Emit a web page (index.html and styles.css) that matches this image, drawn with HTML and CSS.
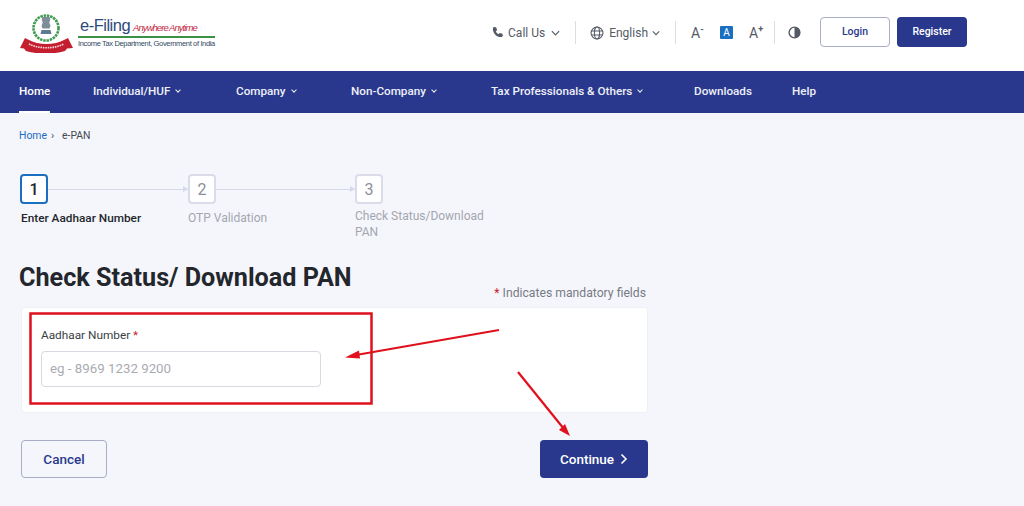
FILE: index.html
```html
<!DOCTYPE html>
<html lang="en">
<head>
    <meta charset="UTF-8">
    <meta name="viewport" content="width=device-width, initial-scale=1.0">
    <title>e-PAN - e-Filing</title>
    <link rel="stylesheet" href="styles.css">
</head>
<body>
    <header class="top-bar">
        <a class="logo" href="#">
            <svg class="logo-emblem" viewBox="0 0 54 40" width="54" height="40">
                <circle cx="26" cy="15" r="12.500" fill="none" stroke="#3f9a52" stroke-width="2.600" stroke-dasharray="2.500 .8"/>
                <path d="M22.500 4h7l.8 2.500-1 3 1.200 3.500-1 2.500h-7l-1-2.500 1.200-3.500-1-3z" fill="#7f8c99"/>
                <path d="M21.500 17h9l1 4h-11z" fill="#5d7a91"/>
                <path d="M0 35l3-6 2-4 3 1.500c11 6 26 6 37 0l3-1.500 2 4 3 6-6 .5-2 2.500c-12 3.500-27 3.500-39 0l-2-2.500z" fill="#c41f30"/>
                <path d="M9 31c10 5 25 5 35 0" fill="none" stroke="#f6d5d5" stroke-width="1.600" stroke-dasharray="1.600 .8"/>
            </svg>
            <div class="logo-text">
                <div class="logo-title">
                    <span class="logo-name">e-Filing</span>
                    <span class="logo-tag">Anywhere Anytime</span>
                </div>
                <div class="logo-dept">Income Tax Department, Government of India</div>
            </div>
        </a>
        <div class="top-tools">
            <div class="tool tool-call">
                <svg width="13" height="13" viewBox="0 0 24 24"><path fill="#555b66" d="M6.600 2l3.200.7 1.400 5.300-2.400 2.200c1 2.200 2.700 3.900 4.900 4.900l2.200-2.400 5.300 1.400.7 3.200c.2 1.500-.9 3-2.500 3.100C10.500 21 3 13.500 3.500 4.500c.1-1.600 1.600-2.700 3.100-2.500z"/></svg>
                <span>Call Us</span>
                <svg class="chev" width="9" height="6" viewBox="0 0 10 6"><path d="M1 1l4 4 4-4" fill="none" stroke="#555b66" stroke-width="1.300"/></svg>
            </div>
            <div class="tool tool-lang">
                <svg width="14" height="14" viewBox="0 0 16 16" fill="none" stroke="#555b66" stroke-width="1.200"><circle cx="8" cy="8" r="6.800"/><ellipse cx="8" cy="8" rx="3" ry="6.800"/><path d="M1.500 5.700h13M1.500 10.300h13"/></svg>
                <span>English</span>
                <svg class="chev" width="8" height="6" viewBox="0 0 10 6"><path d="M1 1l4 4 4-4" fill="none" stroke="#555b66" stroke-width="1.400"/></svg>
            </div>
            <div class="tool tool-font">
                <span class="font-size">A<sup>-</sup></span>
                <span class="font-current">A</span>
                <span class="font-size">A<sup>+</sup></span>
            </div>
            <div class="tool tool-contrast">
                <svg width="13" height="13" viewBox="0 0 14 14"><circle cx="7" cy="7" r="5.800" fill="none" stroke="#555b66" stroke-width="1.500"/><path d="M7 1a6 6 0 0 1 0 12z" fill="#555b66"/></svg>
            </div>
            <a class="btn btn-login" href="#">Login</a>
            <a class="btn btn-register" href="#">Register</a>
        </div>
    </header>

    <nav class="main-nav">
        <a class="nav-item nav-home active" href="#">Home</a>
        <a class="nav-item nav-individual" href="#">Individual/HUF<i class="nav-chev"></i></a>
        <a class="nav-item nav-company" href="#">Company<i class="nav-chev"></i></a>
        <a class="nav-item nav-noncompany" href="#">Non-Company<i class="nav-chev"></i></a>
        <a class="nav-item nav-tax" href="#">Tax Professionals &amp; Others<i class="nav-chev"></i></a>
        <a class="nav-item nav-downloads" href="#">Downloads</a>
        <a class="nav-item" href="#">Help</a>
    </nav>

    <main class="content">
        <div class="breadcrumb"><a href="#">Home</a><span class="crumb-sep">&rsaquo;</span><span>e-PAN</span></div>

        <ol class="stepper">
            <li class="step step-one active">
                <div class="step-head"><span class="step-num">1</span><span class="step-line"></span></div>
                <div class="step-label">Enter Aadhaar Number</div>
            </li>
            <li class="step step-two">
                <div class="step-head"><span class="step-num">2</span><span class="step-line"></span></div>
                <div class="step-label">OTP Validation</div>
            </li>
            <li class="step step-three">
                <div class="step-head"><span class="step-num">3</span></div>
                <div class="step-label">Check Status/Download PAN</div>
            </li>
        </ol>

        <section class="form-area">
            <h1 class="page-title">Check Status/ Download PAN</h1>
            <p class="mandatory"><b>*</b> Indicates mandatory fields</p>
            <div class="form-card">
                <label class="field-label" for="aadhaar">Aadhaar Number <b>*</b></label>
                <input class="field-input" id="aadhaar" type="text" placeholder="eg - 8969 1232 9200">
            </div>
            <div class="form-actions">
                <a class="btn-large btn-cancel" href="#">Cancel</a>
                <a class="btn-large btn-continue" href="#">Continue
                    <svg width="8" height="12" viewBox="0 0 8 12"><path d="M1.500 1.500L6 6l-4.500 4.500" fill="none" stroke="#fff" stroke-width="1.600"/></svg>
                </a>
            </div>
        </section>
    </main>

    <!-- red annotations drawn on top of the screenshot -->
    <svg class="annotations" width="1024" height="506" viewBox="0 0 1024 506">
        <rect x="30.500" y="313.500" width="341" height="90" fill="none" stroke="#e0101c" stroke-width="2.500"/>
        <path d="M499 330L356 355" stroke="#e0101c" stroke-width="2.200" fill="none"/>
        <path d="M345 357.500l14-7 1 8z" fill="#e0101c"/>
        <path d="M518 372L564 429" stroke="#e0101c" stroke-width="2.200" fill="none"/>
        <path d="M570 436l-11-6 6-6z" fill="#e0101c"/>
    </svg>
</body>
</html>
```

FILE: styles.css
```css
* {
    box-sizing: border-box;
}

body {
    font-family: Roboto, "Liberation Sans", sans-serif;
    margin: 0;
    background-color: #f5f6fb;
    color: #23262c;
    height: 506px;
    overflow: hidden;
}

a {
    text-decoration: none;
    color: inherit;
}

.top-bar {
    height: 71px;
    background: #fff;
    display: flex;
    align-items: center;
    justify-content: space-between;
    padding: 0 57px 8px 20px;
}

.logo {
    display: flex;
    align-items: flex-end;
    gap: 4px;
    margin-top: 2px;
}

.logo-emblem {
    display: block;
}

.logo-text {
    font-family: "Liberation Sans", Arial, sans-serif;
    padding-bottom: 4px;
}

.logo-title {
    display: flex;
    align-items: baseline;
    gap: 3px;
    border-bottom: 2px solid #3c9147;
    line-height: 16px;
    width: 137px;
    padding-left: 2px;
}

.logo-name {
    font-size: 16.500px;
    letter-spacing: -0.500px;
    color: #2c4a7c;
}

.logo-tag {
    font-size: 9.500px;
    font-style: italic;
    color: #c42a45;
    white-space: nowrap;
    letter-spacing: -0.950px;
}

.logo-dept {
    font-size: 7.500px;
    letter-spacing: -0.350px;
    color: #2f4a63;
    line-height: 11px;
    white-space: nowrap;
}

.top-tools {
    display: flex;
    align-items: center;
    color: #555b66;
    font-size: 12px;
}

.tool {
    display: flex;
    align-items: center;
    height: 23px;
    margin-top: 2px;
}

.tool-call {
    gap: 4px;
    padding-right: 15px;
    border-right: 1px solid #dcdde3;
}

.tool-call .chev {
    margin-left: 2px;
}

.tool-lang {
    gap: 5px;
    padding: 0 15px 0 14px;
    border-right: 1px solid #dcdde3;
}

.tool-lang .chev {
    margin-left: -1px;
}

.tool-font {
    gap: 16px;
    padding: 0 12px 0 15px;
    border-right: 1px solid #dcdde3;
}

.font-size {
    font-size: 14px;
    width: 13px;
    white-space: nowrap;
}

.font-size sup {
    font-size: 9px;
    line-height: 0;
    font-weight: 700;
}

.font-current {
    width: 13px;
    height: 13px;
    background: #1a6fc0;
    color: #fff;
    font-size: 10px;
    border-radius: 1px;
    display: flex;
    align-items: center;
    justify-content: center;
}

.tool-contrast {
    padding-left: 13px;
    margin-right: 19px;
}

.btn {
    width: 70px;
    height: 30px;
    display: flex;
    align-items: center;
    justify-content: center;
    border-radius: 4px;
    font-size: 10.500px;
    font-weight: 500;
}

.btn-login {
    background: #fff;
    border: 1px solid #a9adc4;
    color: #2a3a8c;
    margin-right: 7px;
}

.btn-register {
    background: #29388c;
    color: #fff;
}

.main-nav {
    height: 42px;
    background: #29388c;
    display: flex;
    align-items: center;
    padding-left: 19px;
    color: #fff;
    font-size: 11.700px;
    font-weight: 500;
}

.nav-item {
    position: relative;
    height: 42px;
    line-height: 41px;
    white-space: nowrap;
    color: #eef0f8;
}

.nav-home {
    width: 74px;
    color: #fff;
}

.nav-individual {
    width: 143px;
}

.nav-company {
    width: 115px;
}

.nav-noncompany {
    width: 140px;
}

.nav-tax {
    width: 203px;
}

.nav-downloads {
    width: 98px;
}

.nav-home::after {
    content: "";
    position: absolute;
    left: 0;
    bottom: 0;
    width: 31px;
    height: 2px;
    background: #fff;
}

.nav-chev {
    display: inline-block;
    width: 4px;
    height: 4px;
    border-right: 1px solid #eef0f8;
    border-bottom: 1px solid #eef0f8;
    transform: rotate(45deg);
    margin-left: 6px;
    vertical-align: 3px;
}

.content {
    padding: 16px 0 0 19px;
}

.breadcrumb {
    font-size: 10.400px;
    line-height: 13px;
    color: #44484f;
}

.breadcrumb a {
    color: #1b6cc0;
}

.crumb-sep {
    margin: 0 8px 0 4px;
}

.stepper {
    list-style: none;
    margin: 32px 0 0;
    padding: 0 0 0 1px;
    display: flex;
    height: 74px;
}

.step-one {
    width: 168px;
}

.step-two {
    width: 167px;
}

.step-three {
    width: 135px;
}

.step-head {
    display: flex;
    align-items: center;
    height: 30px;
}

.step-num {
    flex: none;
    width: 28px;
    height: 30px;
    border: 2px solid #dadcea;
    border-radius: 4px;
    background: #fff;
    color: #8b8f9a;
    font-size: 16px;
    display: flex;
    align-items: center;
    justify-content: center;
}

.active .step-num {
    border-color: #1a6fc0;
    color: #23262c;
    font-weight: 500;
}

.step-line {
    flex: 1;
    height: 1px;
    background: #d6d9ec;
    position: relative;
}

.step-line::after {
    content: "";
    position: absolute;
    right: 0;
    top: -3px;
    border-left: 5px solid #d6d9ec;
    border-top: 3.500px solid transparent;
    border-bottom: 3.500px solid transparent;
}

.step-label {
    margin-top: 6px;
    font-size: 12px;
    line-height: 17px;
    color: #a3a6b0;
}

.step-three .step-label {
    margin-top: 4px;
    line-height: 16px;
}

.active .step-label {
    color: #23262c;
    font-weight: 500;
    font-size: 11.800px;
    white-space: nowrap;
    padding-left: 1px;
}

.form-area {
    width: 629px;
    margin-top: 15px;
}

.page-title {
    margin: 0 0 -8px;
    font-size: 25.200px;
    font-weight: 700;
    line-height: 30px;
    color: #23262c;
}

.mandatory {
    margin: 0;
    height: 22px;
    padding: 1px 2px 0 0;
    text-align: right;
    font-size: 12.200px;
    line-height: 15px;
    color: #777b85;
}

.mandatory b,
.field-label b {
    color: #c8202f;
    font-weight: 400;
}

.form-card {
    margin-left: 2px;
    height: 106px;
    background: #fff;
    border: 1px solid #eff0f5;
    border-radius: 4px;
    padding: 20px 19px;
}

.field-label {
    display: block;
    font-size: 11.800px;
    line-height: 15px;
    color: #3b3e45;
}

.field-input {
    display: block;
    width: 280px;
    height: 36px;
    margin-top: 8px;
    padding: 0 8px 2px;
    border: 1px solid #d8dae2;
    border-radius: 4px;
    background: #fff;
    font-family: inherit;
    font-size: 13.300px;
}

.field-input::placeholder {
    color: #a9abb2;
}

.form-actions {
    margin-top: 27px;
    padding-left: 2px;
    display: flex;
    justify-content: space-between;
}

.btn-large {
    height: 38px;
    display: flex;
    align-items: center;
    justify-content: center;
    gap: 6px;
    border-radius: 4px;
    font-size: 13.500px;
    font-weight: 500;
}

.btn-cancel {
    width: 86px;
    border: 1px solid #a9adc4;
    color: #2a3a8c;
}

.btn-continue {
    width: 108px;
    background: #29388c;
    color: #fff;
}

.annotations {
    position: absolute;
    top: 0;
    left: 0;
    pointer-events: none;
}
```
